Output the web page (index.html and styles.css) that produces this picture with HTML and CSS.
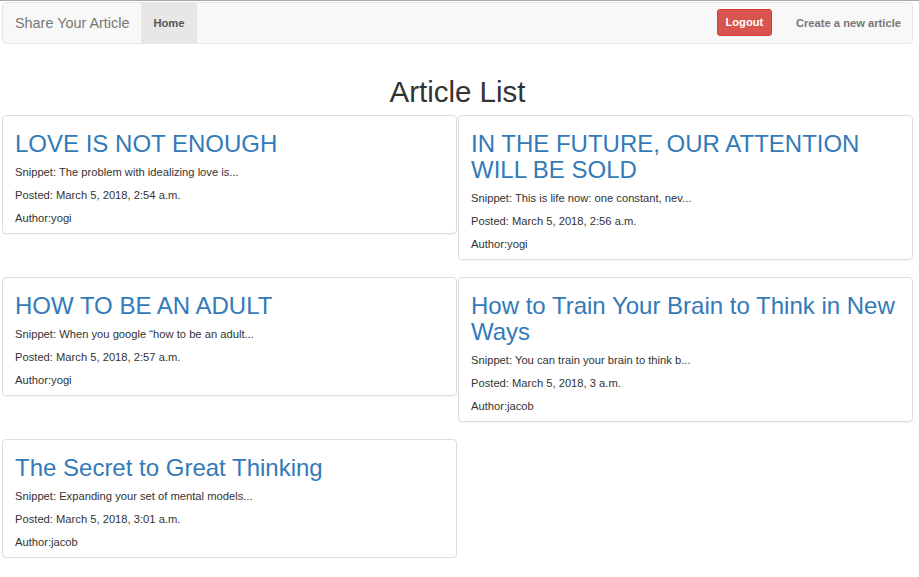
FILE: index.html
```html
<!DOCTYPE html>
<html>
<head>
<meta charset="utf-8">
<title>Article List</title>
<link rel="stylesheet" href="styles.css">
</head>
<body>
<div class="topline"></div>
<div class="page">
  <nav class="navbar">
    <div class="nav-left">
      <a class="brand" href="#">Share Your Article</a>
      <a class="nav-link active" href="#">Home</a>
    </div>
    <div class="nav-right">
      <button class="btn-logout">Logout</button>
      <a class="nav-link create" href="#">Create a new article</a>
    </div>
  </nav>

  <h1 class="page-title">Article List</h1>

  <div class="grid">
    <div class="card">
      <h2 class="card-title">LOVE IS NOT ENOUGH</h2>
      <p class="meta">Snippet: The problem with idealizing love is...</p>
      <p class="meta">Posted: March 5, 2018, 2:54 a.m.</p>
      <p class="meta">Author:yogi</p>
    </div>
    <div class="card">
      <h2 class="card-title">IN THE FUTURE, OUR ATTENTION WILL BE SOLD</h2>
      <p class="meta">Snippet: This is life now: one constant, nev...</p>
      <p class="meta">Posted: March 5, 2018, 2:56 a.m.</p>
      <p class="meta">Author:yogi</p>
    </div>
    <div class="card">
      <h2 class="card-title">HOW TO BE AN ADULT</h2>
      <p class="meta">Snippet: When you google “how to be an adult...</p>
      <p class="meta">Posted: March 5, 2018, 2:57 a.m.</p>
      <p class="meta">Author:yogi</p>
    </div>
    <div class="card">
      <h2 class="card-title">How to Train Your Brain to Think in New Ways</h2>
      <p class="meta">Snippet: You can train your brain to think b...</p>
      <p class="meta">Posted: March 5, 2018, 3 a.m.</p>
      <p class="meta">Author:jacob</p>
    </div>
    <div class="card">
      <h2 class="card-title">The Secret to Great Thinking</h2>
      <p class="meta">Snippet: Expanding your set of mental models...</p>
      <p class="meta">Posted: March 5, 2018, 3:01 a.m.</p>
      <p class="meta">Author:jacob</p>
    </div>
  </div>
</div>
</body>
</html>
```

FILE: styles.css
```css
* { box-sizing: border-box; }

html, body {
  margin: 0;
  padding: 0;
  background: #fff;
  font-family: "Liberation Sans", Arial, sans-serif;
  color: #333;
}

.topline {
  height: 1px;
  background: #a8a8a8;
  margin-bottom: 1px;
}

.page {
  width: 911px;
  margin-left: 2px;
}

.navbar {
  display: flex;
  justify-content: space-between;
  align-items: center;
  height: 42px;
  background: #f8f8f8;
  border: 1px solid #e7e7e7;
  border-radius: 4px;
}

.nav-left, .nav-right {
  display: flex;
  align-items: center;
  height: 100%;
}

.brand {
  font-size: 14.4px;
  color: #777;
  text-decoration: none;
  padding: 0 12px;
  line-height: 40px;
}

.nav-link {
  font-size: 11.2px;
  font-weight: bold;
  color: #555;
  text-decoration: none;
  line-height: 40px;
  padding: 0 12px;
}

.nav-link.active {
  background: #e7e7e7;
  color: #555;
  height: 40px;
  padding: 0 12px;
}

.nav-link.create {
  color: #777;
  padding: 0 11px 0 24px;
}

.btn-logout {
  font-family: "Liberation Sans", Arial, sans-serif;
  font-size: 11.2px;
  font-weight: bold;
  color: #fff;
  background: #d9534f;
  border: 1px solid #d43f3a;
  border-radius: 3px;
  height: 27px;
  width: 55px;
  padding: 0 0 2px;
  margin-bottom: 1px;
}

.page-title {
  text-align: center;
  font-size: 29.5px;
  font-weight: 500;
  line-height: 33px;
  margin: 31px 0 7px;
}

.grid {
  display: grid;
  grid-template-columns: 455px 455px;
  column-gap: 1px;
  row-gap: 17px;
  align-items: start;
}

.card {
  border: 1px solid #ddd;
  border-radius: 4px;
  box-shadow: 0 1px 1px rgba(0, 0, 0, 0.05);
  padding: 15px 11px 7px 12px;
}

.card-title {
  font-size: 24px;
  font-weight: 500;
  line-height: 26px;
  color: #337ab7;
  margin: 0 0 8px;
}

.meta {
  font-size: 11.2px;
  line-height: 15px;
  margin: 0 0 8px;
}

.meta:last-child {
  margin-bottom: 0;
}
```
